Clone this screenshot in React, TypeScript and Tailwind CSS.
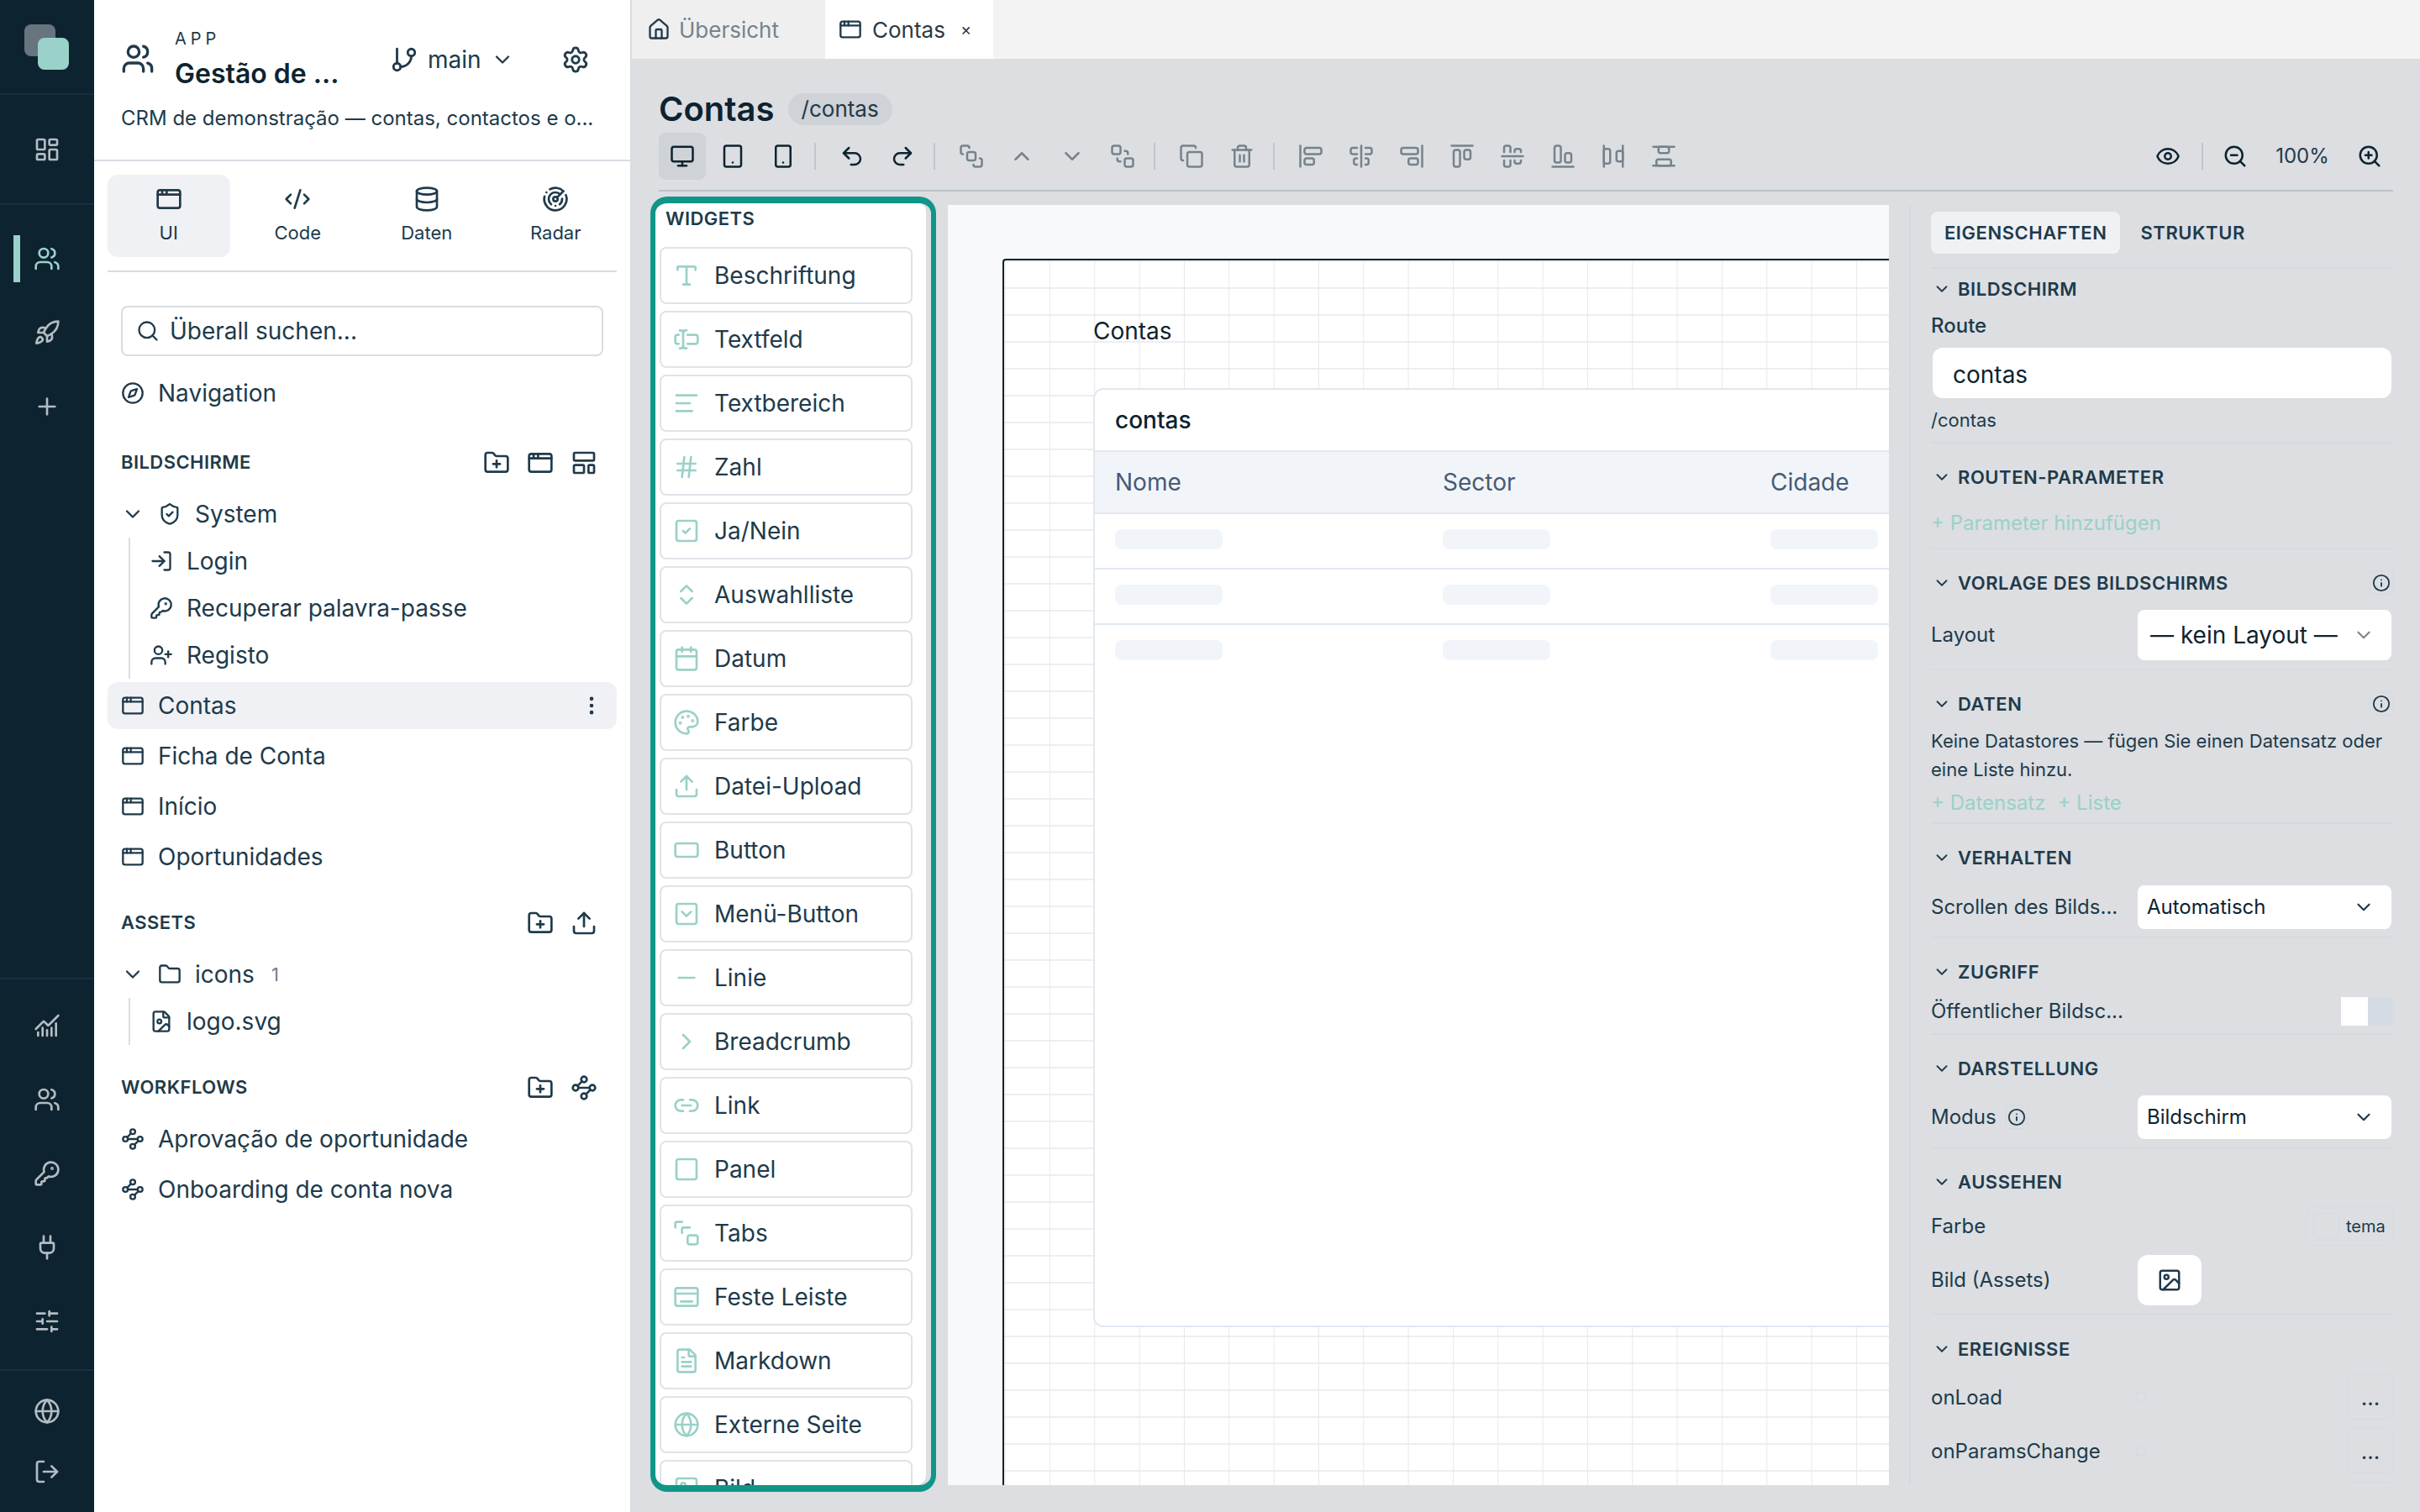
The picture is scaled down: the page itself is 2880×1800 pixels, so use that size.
import {
  AlignCenterHorizontal, AlignCenterVertical, AlignEndHorizontal, AlignEndVertical, AlignHorizontalSpaceBetween,
  AlignLeft, AlignStartHorizontal, AlignStartVertical, AlignVerticalSpaceBetween, AppWindow, BringToFront,
  Calendar, ChartNoAxesCombined, ChevronDown, ChevronRight, ChevronUp, ChevronsUpDown, CodeXml, Compass, Copy,
  Database, EllipsisVertical, Eye, FileImage, FileText, Folder, FolderPlus, GitBranch, Globe,
  Hash, House, Image, Info, KeyRound, LayoutDashboard, LayoutTemplate, Link2, LogIn, LogOut, Minus, Monitor, Palette,
  Plug, Plus, Radar, RectangleHorizontal, Redo2, Rocket, Search, SendToBack, Settings, ShieldCheck,
  SlidersHorizontal, Smartphone, Square, SquareCheck, SquareChevronDown, Tablet, TextCursorInput, Trash2, Type,
  Undo2, Upload, UserPlus, Users, Waypoints, ZoomIn, ZoomOut,
} from "lucide-react";
import type { LucideIcon } from "lucide-react";
import type { ComponentType, ReactNode } from "react";

type Ico = ComponentType<{ size?: number; className?: string }>;

const font = "font-['Inter','Liberation_Sans',sans-serif]";

// lucide has no match for these two widget icons
function TabsIcon({ size = 24, className }: { size?: number; className?: string }) {
  return (
    <svg width={size} height={size} viewBox="0 0 24 24" fill="none" stroke="currentColor" strokeWidth="2" strokeLinecap="round" strokeLinejoin="round" className={className}>
      <path d="M2 7V3.5A1.5 1.5 0 0 1 3.5 2H8" />
      <path d="M8 12V8.5A1.5 1.5 0 0 1 9.5 7H15" />
      <rect x="13" y="14" width="9" height="8" rx="2" />
    </svg>
  );
}

function BarIcon({ size = 24, className }: { size?: number; className?: string }) {
  return (
    <svg width={size} height={size} viewBox="0 0 24 24" fill="none" stroke="currentColor" strokeWidth="2" strokeLinecap="round" strokeLinejoin="round" className={className}>
      <rect x="2" y="4" width="20" height="16" rx="2" />
      <path d="M2 9h20" />
      <path d="M7 16h10" />
    </svg>
  );
}

function IconRail() {
  const Item = ({ icon: I, active }: { icon: LucideIcon; active?: boolean }) => (
    <div className="relative flex h-[88px] items-center justify-center">
      {active && <div className="absolute left-4 top-4 h-14 w-2 bg-[#9ad1c8]" />}
      <I size={32} strokeWidth={2} className={active ? "text-[#9ad1c8]" : "text-[#b4bcc2]"} />
    </div>
  );
  return (
    <aside className="flex h-full w-[112px] shrink-0 flex-col bg-[#0d2330]">
      <div className="h-[113px] shrink-0 border-b-2 border-[#15303f] pl-[29px] pt-[29px]">
        <div className="relative h-[54px] w-[53px]">
          <div className="absolute left-0 top-0 h-[38px] w-[37px] rounded-lg bg-[#67757f]" />
          <div className="absolute bottom-0 right-0 h-[38px] w-[37px] rounded-lg bg-[#9ad1c8]" />
        </div>
      </div>
      <div className="flex h-[131px] shrink-0 items-center justify-center border-b-2 border-[#15303f]">
        <LayoutDashboard size={32} className="text-[#b4bcc2]" />
      </div>
      <div className="flex flex-col pt-[20px]">
        <Item icon={Users} active />
        <Item icon={Rocket} />
        <Item icon={Plus} />
      </div>
      <div className="mt-auto flex flex-col border-t-2 border-[#15303f] pt-[11px]">
        <Item icon={ChartNoAxesCombined} />
        <Item icon={Users} />
        <Item icon={KeyRound} />
        <Item icon={Plug} />
        <Item icon={SlidersHorizontal} />
      </div>
      <div className="mt-[13px] flex flex-col border-t-2 border-[#15303f] pb-[4px] pt-[4px]">
        <Item icon={Globe} />
        <div className="-mt-[16px]"><Item icon={LogOut} /></div>
      </div>
    </aside>
  );
}

function SectionHead({ label, icons }: { label: string; icons: LucideIcon[] }) {
  return (
    <div className="flex h-8 items-center justify-between px-4 text-[#203a4a]">
      <span className="text-[22px] font-semibold tracking-[0.02em]">{label}</span>
      <div className="flex items-center gap-[20px] pr-[7px] pt-[2px]">
        {icons.map((I, i) => <I key={i} size={32} />)}
      </div>
    </div>
  );
}

function TreeRow({ icon: I, label }: { icon: LucideIcon; label: string }) {
  return (
    <div className="flex h-[56px] items-center gap-4 pl-[23px] text-[#203a4a]">
      <I size={28} />
      <span className="text-[28px]">{label}</span>
    </div>
  );
}

function ScreenRow({ icon: I, label, active }: { icon: LucideIcon; label: string; active?: boolean }) {
  return (
    <div className={active ? "flex h-[56px] items-center gap-4 rounded-xl bg-[#f0f1f5] px-4 text-[#203a4a]" : "flex h-[60px] items-center gap-4 rounded-xl px-4 text-[#203a4a]"}>
      <I size={28} />
      <span className="flex-1 text-[28px]">{label}</span>
      {active && <EllipsisVertical size={28} />}
    </div>
  );
}

function LeftPanel() {
  const tabs = [
    { icon: AppWindow, label: "UI", active: true },
    { icon: CodeXml, label: "Code" },
    { icon: Database, label: "Daten" },
    { icon: Radar, label: "Radar" },
  ];
  return (
    <aside className="flex h-full w-[638px] shrink-0 flex-col bg-white text-[#203a4a]">
      <div className="flex h-[192px] shrink-0 flex-col border-b-2 border-[#d8dde3] px-8 pt-[34px]">
        <div className="flex h-[72px] items-center">
          <Users size={40} strokeWidth={2} />
          <div className="ml-[24px] h-[72px] w-[214px] shrink-0">
            <div className="text-[20px] leading-6 tracking-[0.25em]">APP</div>
            <div className="mt-[6px] whitespace-nowrap text-[32px] font-semibold leading-[48px] text-[#0d2330]">Gestão de ...</div>
          </div>
          <div className="flex items-center pt-[2px]">
            <GitBranch size={34} className="ml-[42px]" />
            <span className="ml-[11px] text-[28px]">main</span>
            <ChevronDown size={28} className="ml-[11px]" />
            <Settings size={34} className="ml-[56px]" />
          </div>
        </div>
        <div className="mt-[19px] whitespace-nowrap text-[24px] leading-8">CRM de demonstração — contas, contactos e o...</div>
      </div>
      <div className="mx-4 mt-4 flex h-[116px] shrink-0 gap-2 border-b-2 border-[#d8dde3] pb-4">
        {tabs.map((t) => (
          <div key={t.label} className={"flex w-[146px] flex-col items-center justify-center rounded-xl " + (t.active ? "bg-[#f0f1f5]" : "")}>
            <t.icon size={32} />
            <span className="mt-[8px] text-[22px] leading-8">{t.label}</span>
          </div>
        ))}
      </div>
      <div className="mx-8 mt-[40px] flex h-[60px] shrink-0 items-center gap-[12px] rounded-lg border-2 border-[#d8dde3] px-[16px]">
        <Search size={28} />
        <span className="text-[28px]">Überall suchen...</span>
      </div>
      <div className="mt-[14px] px-4">
        <div className="flex h-[60px] items-center gap-4 px-4">
          <Compass size={28} />
          <span className="text-[28px]">Navigation</span>
        </div>
      </div>
      <div className="mt-[36px] flex flex-col px-4">
        <SectionHead label="BILDSCHIRME" icons={[FolderPlus, AppWindow, LayoutTemplate]} />
        <div className="mt-[18px] flex h-[56px] items-center gap-4 pl-4">
          <ChevronDown size={28} />
          <ShieldCheck size={28} />
          <span className="text-[28px]">System</span>
        </div>
        <div className="ml-[25px] border-l-2 border-[#d8dde3]">
          <TreeRow icon={LogIn} label="Login" />
          <TreeRow icon={KeyRound} label="Recuperar palavra-passe" />
          <TreeRow icon={UserPlus} label="Registo" />
        </div>
        <div className="mt-[4px]">
          <ScreenRow icon={AppWindow} label="Contas" active />
        </div>
        <div className="mt-[2px]">
          <ScreenRow icon={AppWindow} label="Ficha de Conta" />
          <ScreenRow icon={AppWindow} label="Início" />
          <ScreenRow icon={AppWindow} label="Oportunidades" />
        </div>
        <div className="mt-[32px]"><SectionHead label="ASSETS" icons={[FolderPlus, Upload]} /></div>
        <div className="mt-[18px] flex h-[56px] items-center gap-4 pl-4">
          <ChevronDown size={28} />
          <Folder size={28} />
          <span className="text-[28px]">icons</span>
          <span className="ml-[4px] text-[22px] text-[#6d808c]">1</span>
        </div>
        <div className="ml-[25px] border-l-2 border-[#d8dde3]">
          <TreeRow icon={FileImage} label="logo.svg" />
        </div>
        <div className="mt-[34px]"><SectionHead label="WORKFLOWS" icons={[FolderPlus, Waypoints]} /></div>
        <div className="mt-[16px]">
          <ScreenRow icon={Waypoints} label="Aprovação de oportunidade" />
          <ScreenRow icon={Waypoints} label="Onboarding de conta nova" />
        </div>
      </div>
    </aside>
  );
}

const widgets: [Ico, string][] = [
  [Type, "Beschriftung"], [TextCursorInput, "Textfeld"], [AlignLeft, "Textbereich"], [Hash, "Zahl"],
  [SquareCheck, "Ja/Nein"], [ChevronsUpDown, "Auswahlliste"], [Calendar, "Datum"], [Palette, "Farbe"],
  [Upload, "Datei-Upload"], [RectangleHorizontal, "Button"], [SquareChevronDown, "Menü-Button"], [Minus, "Linie"],
  [ChevronRight, "Breadcrumb"], [Link2, "Link"], [Square, "Panel"], [TabsIcon, "Tabs"],
  [BarIcon, "Feste Leiste"], [FileText, "Markdown"], [Globe, "Externe Seite"], [Image, "Bild"],
];

function WidgetPanel() {
  return (
    <div className="relative h-[1542px] w-[340px] shrink-0 px-[6px] pb-[8px] pt-[6px] pr-[12px]">
      <div className="flex h-full flex-col overflow-hidden rounded-xl bg-white pl-[5px] pr-[16px]">
        <div className="mb-[14px] flex h-[40px] shrink-0 items-center pl-[7px] text-[22px] font-semibold tracking-[0.02em] text-[#203a4a]">WIDGETS</div>
        <div className="flex flex-col gap-2">
          {widgets.map(([I, label]) => (
            <div key={label} className="flex h-[68px] shrink-0 items-center rounded-lg border-2 border-[#dfe3e8] pl-[14px] text-[#203a4a]">
              <I size={32} className="shrink-0 text-[#9ad1c8]" />
              <span className="ml-[17px] text-[28px]">{label}</span>
            </div>
          ))}
        </div>
      </div>
      <div className="absolute inset-0 rounded-[20px] border-x-[6px] border-y-[8px] border-[#0f9688]" />
    </div>
  );
}

function Canvas() {
  return (
    <div className="h-full flex-1 overflow-hidden bg-[#f8f9fb] pl-[65px] pt-[64px]">
      <div className="h-[1500px] w-[1400px] rounded-tl border-l-2 border-t-2 border-[#0d2330] bg-white bg-[linear-gradient(to_right,#e6e8eb_1px,transparent_1px),linear-gradient(to_bottom,#eceef1_2px,transparent_2px)] bg-[size:53.33px_32px] bg-[position:0.67px_0px] pl-[106px] pt-[68px] text-[#0d2330]">
        <div className="h-[84px] text-[28px] leading-8">Contas</div>
        <div className="h-[1118px] w-[1400px] rounded-tl-xl rounded-bl-xl border-2 border-[#e2e8f0] bg-white">
          <div className="flex h-[74px] items-center border-b-2 border-[#e2e8f0] pl-[24px] text-[28px] font-medium">contas</div>
          <div className="flex h-[74px] items-center border-b-2 border-[#e2e8f0] bg-[#f1f5f9] pl-[24px] text-[28px] text-[#475a73]">
            <span className="w-[390px]">Nome</span><span className="w-[390px]">Sector</span><span>Cidade</span>
          </div>
          {[0, 1, 2].map((r) => (
            <div key={r} className={r < 2 ? "flex h-[66px] items-center border-b-2 border-[#e2e8f0] pb-[4px] pl-[24px]" : "flex h-[60px] items-center pl-[24px]"}>
              {[0, 1, 2].map((c) => (
                <div key={c} className="w-[390px]"><div className="h-[24px] w-[128px] rounded-lg bg-[#f1f5f9]" /></div>
              ))}
            </div>
          ))}
        </div>
      </div>
    </div>
  );
}

function InfoBox({ className = "" }: { className?: string }) {
  return (
    <span className={"flex h-[28px] w-[28px] items-center justify-center border border-[#d5dade] text-[#203a4a] " + className}>
      <Info size={22} />
    </span>
  );
}

function PropSection({ title, info, children, noBorder }: { title: string; info?: boolean; children?: ReactNode; noBorder?: boolean }) {
  return (
    <section className={noBorder ? "" : "border-b-2 border-[#d5dade]"}>
      <div className="flex h-[34px] items-center text-[#203a4a]">
        <ChevronDown size={22} className="ml-[2px]" />
        <span className="ml-[8px] text-[22px] font-semibold tracking-[0.025em]">{title}</span>
        {info && <InfoBox className="ml-auto" />}
      </div>
      {children}
    </section>
  );
}

function SelectRow({ label, value, box, extra, iconTone = "text-[#203a4a]" }: { label: string; value: string; box: string; extra?: ReactNode; iconTone?: string }) {
  return (
    <div className="flex items-center">
      <div className="flex w-[246px] items-center whitespace-nowrap text-[24px] text-[#203a4a]">{label}{extra}</div>
      <div className={"flex w-[302px] items-center justify-between rounded-lg bg-white pr-[20px] text-[#0d2330] " + box}>
        <span>{value}</span>
        <ChevronDown size={26} className={iconTone} />
      </div>
    </div>
  );
}

function EventRow({ label, dots = true }: { label: string; dots?: boolean }) {
  return (
    <div className="flex h-[54px] items-center text-[24px] text-[#203a4a]">
      <span className="w-[244px] pt-[2px]">{label}</span>
      <span className="h-[12px] w-[12px] border border-[#d5dade]" />
      <span className="ml-auto flex h-[54px] w-[54px] items-center justify-center rounded-lg border border-[#d5dade] text-[26px]">{dots ? "..." : ""}</span>
    </div>
  );
}

function RightPanel() {
  return (
    <div className="ml-[24px] h-full w-[608px] shrink-0 overflow-hidden border-l-2 border-[#d5dade] pl-[24px] pr-[32px] pt-[8px]">
      <div className="flex h-[50px] items-center text-[22px] font-semibold tracking-[0.025em] text-[#203a4a]">
        <span className="flex h-[50px] items-center rounded-lg bg-[#eff1f5] px-[16px]">EIGENSCHAFTEN</span>
        <span className="ml-[24px]">STRUKTUR</span>
      </div>
      <div className="mt-[16px] border-t-2 border-[#d5dade] pt-[7px]">
        <PropSection title="BILDSCHIRM">
          <div className="mt-[11px] text-[24px] font-medium leading-8 text-[#203a4a]">Route</div>
          <div className="mx-[2px] mt-[10px] flex h-[60px] items-center rounded-xl bg-white pl-[24px] pt-[3px] text-[28px] text-[#0d2330]">contas</div>
          <div className="mb-[10px] mt-[10px] text-[22px] leading-8 text-[#203a4a]">/contas</div>
        </PropSection>
        <div className="mt-[23px]">
          <PropSection title="ROUTEN-PARAMETER">
            <div className="mb-[13px] mt-[22px] text-[24px] leading-8 text-[#9ad1c8]">+ Parameter hinzufügen</div>
          </PropSection>
        </div>
        <div className="mt-[23px]">
          <PropSection title="VORLAGE DES BILDSCHIRMS" info>
            <div className="mb-[10px] mt-[15px]">
              <SelectRow label="Layout" value="— kein Layout —" box="h-[60px] pl-[15px] text-[28px]" iconTone="text-[#7b868e]" />
            </div>
          </PropSection>
        </div>
        <div className="mt-[23px]">
          <PropSection title="DATEN" info>
            <div className="mt-[10px] text-[22px] leading-[34px] text-[#203a4a]">Keine Datastores — fügen Sie einen Datensatz oder<br />eine Liste hinzu.</div>
            <div className="mb-[7px] mt-[7px] flex gap-[14px] text-[24px] leading-8 text-[#9ad1c8]"><span>+ Datensatz</span><span>+ Liste</span></div>
          </PropSection>
        </div>
        <div className="mt-[23px]">
          <PropSection title="VERHALTEN">
            <div className="mb-[9px] mt-[16px]">
              <SelectRow label="Scrollen des Bilds..." value="Automatisch" box="h-[52px] pl-[11px] text-[24px]" />
            </div>
          </PropSection>
        </div>
        <div className="mt-[23px]">
          <PropSection title="ZUGRIFF">
            <div className="mb-[9px] mt-[13px] flex h-[34px] items-center justify-between text-[24px] text-[#203a4a]">
              <span>Öffentlicher Bildsc...</span>
              <div className="h-[34px] w-[62px] bg-[#d5dbe3]"><div className="h-[34px] w-[32px] bg-white" /></div>
            </div>
          </PropSection>
        </div>
        <div className="mt-[23px]">
          <PropSection title="DARSTELLUNG">
            <div className="mb-[10px] mt-[15px]">
              <SelectRow label="Modus" value="Bildschirm" box="h-[52px] pl-[11px] text-[24px]" extra={<InfoBox className="ml-[10px]" />} />
            </div>
          </PropSection>
        </div>
        <div className="mt-[22px]">
          <PropSection title="AUSSEHEN">
            <div className="mt-[12px] flex h-[47px] items-center justify-between text-[24px] text-[#203a4a]">
              <span>Farbe</span>
              <span className="flex h-[47px] w-[104px] items-center gap-[8px] rounded-lg border border-[#d5dade] pl-[8px] text-[20px]">
                <span className="h-[31px] w-[31px] rounded border border-[#d5dade]" />tema
              </span>
            </div>
            <div className="mb-[9px] mt-[11px] flex items-center">
              <div className="w-[246px] text-[24px] text-[#203a4a]">Bild (Assets)</div>
              <div className="flex h-[60px] w-[76px] items-center justify-center rounded-xl bg-white"><Image size={30} className="text-[#203a4a]" /></div>
            </div>
          </PropSection>
        </div>
        <div className="mt-[24px]">
          <PropSection title="EREIGNISSE" noBorder>
            <div className="mt-[13px] flex flex-col gap-[10px]">
              <EventRow label="onLoad" />
              <EventRow label="onParamsChange" />
              <EventRow label="" dots={false} />
            </div>
          </PropSection>
        </div>
      </div>
    </div>
  );
}

function Toolbar() {
  const Btn = ({ icon: I, tone = "text-[#0d2330]", active }: { icon: LucideIcon; tone?: string; active?: boolean }) => (
    <div className={"flex h-[56px] w-[56px] items-center justify-center rounded-lg " + (active ? "bg-[#cfd2d7] " : "") + tone}>
      <I size={30} />
    </div>
  );
  const Sep = () => <div className="ml-[5px] mr-[11px] h-[32px] w-[2px] bg-[#bfc5cb]" />;
  const gray = "text-[#75838b]";
  return (
    <div className="flex h-[56px] items-center gap-[4px]">
      <Btn icon={Monitor} active />
      <Btn icon={Tablet} />
      <Btn icon={Smartphone} />
      <Sep />
      <Btn icon={Undo2} />
      <Btn icon={Redo2} />
      <Sep />
      <Btn icon={BringToFront} tone={gray} />
      <Btn icon={ChevronUp} tone={gray} />
      <Btn icon={ChevronDown} tone={gray} />
      <Btn icon={SendToBack} tone={gray} />
      <Sep />
      <Btn icon={Copy} tone={gray} />
      <Btn icon={Trash2} tone={gray} />
      <Sep />
      <Btn icon={AlignStartVertical} tone={gray} />
      <Btn icon={AlignCenterVertical} tone={gray} />
      <Btn icon={AlignEndVertical} tone={gray} />
      <Btn icon={AlignStartHorizontal} tone={gray} />
      <Btn icon={AlignCenterHorizontal} tone={gray} />
      <Btn icon={AlignEndHorizontal} tone={gray} />
      <Btn icon={AlignHorizontalSpaceBetween} tone={gray} />
      <Btn icon={AlignVerticalSpaceBetween} tone={gray} />
      <div className="ml-auto flex items-center gap-[4px] text-[#0d2330]">
        <Btn icon={Eye} />
        <div className="ml-[8px] mr-[6px] h-[32px] w-[2px] bg-[#bfc5cb]" />
        <Btn icon={ZoomOut} />
        <span className="w-[96px] text-center text-[24px] text-[#203a4a]">100%</span>
        <Btn icon={ZoomIn} />
      </div>
    </div>
  );
}

function Main() {
  return (
    <main className="flex h-full min-w-0 flex-1 flex-col border-l-2 border-[#d8dde3] bg-[#dcdee2]">
      <div className="flex h-[70px] shrink-0 bg-[#f3f3f3] text-[26px]">
        <div className="flex w-[230px] items-center gap-[10px] bg-[#efefef] pl-[18px] text-[#75838b]">
          <House size={28} className="text-[#203a4a]" />Übersicht
        </div>
        <div className="flex w-[200px] items-center gap-[12px] bg-white pl-[16px] text-[#2b3a44]">
          <AppWindow size={28} className="text-[#203a4a]" />Contas<span className="ml-[6px] text-[20px]">×</span>
        </div>
      </div>
      <div className="flex h-[88px] shrink-0 items-center gap-[16px] pl-8 pt-[32px]">
        <h1 className="text-[40px] font-semibold leading-[48px] text-[#0d2330]">Contas</h1>
        <span className="rounded-full bg-[#cfd2d6] px-[16px] py-[3px] text-[26px] leading-8 text-[#203a4a]">/contas</span>
      </div>
      <div className="mx-8 shrink-0 border-b-2 border-[#bcc3ca] pb-[12px]"><Toolbar /></div>
      <div className="flex min-h-0 flex-1 pb-[32px] pl-[22px]">
        <div className="h-full pt-[6px]"><WidgetPanel /></div>
        <div className="ml-[14px] mt-[16px] flex h-[calc(100%-16px)] min-w-0 flex-1">
          <Canvas />
        </div>
        <div className="flex h-full shrink-0 pt-[16px]"><RightPanel /></div>
      </div>
    </main>
  );
}

export default function App() {
  return (
    <div className={"flex h-[1800px] w-[2880px] overflow-hidden " + font}>
      <IconRail />
      <LeftPanel />
      <Main />
    </div>
  );
}
